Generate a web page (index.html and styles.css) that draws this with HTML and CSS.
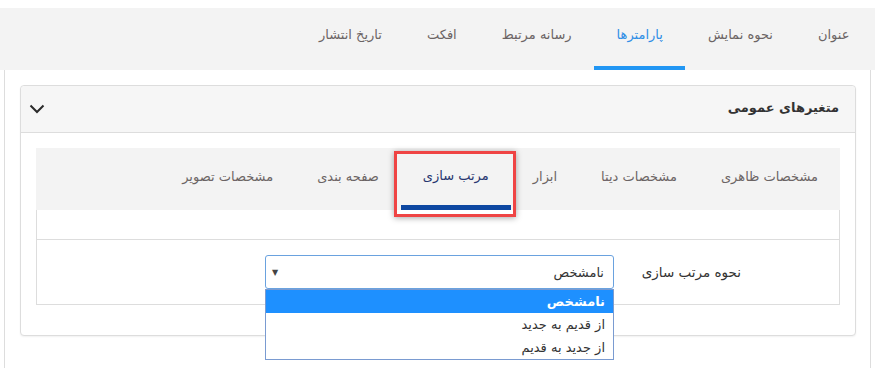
FILE: index.html
```html
<!DOCTYPE html>
<html lang="fa" dir="rtl">
<head>
  <meta charset="UTF-8">
  <title>پارامترها</title>
  <link rel="stylesheet" href="styles.css">
</head>
<body>
  <nav class="main-tabs">
    <a class="main-tab">عنوان</a>
    <a class="main-tab">نحوه نمایش</a>
    <a class="main-tab active">پارامترها</a>
    <a class="main-tab">رسانه مرتبط</a>
    <a class="main-tab">افکت</a>
    <a class="main-tab">تاریخ انتشار</a>
  </nav>

  <div class="tab-content">
    <div class="panel">
      <div class="panel-heading">
        <h3 class="panel-title">متغیرهای عمومی</h3>
        <svg class="chevron" width="16" height="10" viewBox="0 0 16 10">
          <path d="M1.5 1.5 L8 8 L14.5 1.5" fill="none" stroke="#2b2b2b" stroke-width="2"/>
        </svg>
      </div>
      <div class="panel-body">
        <div class="sub-tabs">
          <nav class="sub-nav">
            <a class="sub-tab">مشخصات ظاهری</a>
            <a class="sub-tab">مشخصات دیتا</a>
            <a class="sub-tab">ابزار</a>
            <a class="sub-tab active">مرتب سازی</a>
            <a class="sub-tab">صفحه بندی</a>
            <a class="sub-tab">مشخصات تصویر</a>
          </nav>
          <div class="sub-spacer"></div>
          <div class="form-row">
            <label class="form-label">نحوه مرتب سازی</label>
            <div class="select-wrap">
              <div class="select-box">
                <span>نامشخص</span>
                <span class="caret">▼</span>
              </div>
              <ul class="select-list">
                <li class="selected">نامشخص</li>
                <li>از قدیم به جدید</li>
                <li>از جدید به قدیم</li>
              </ul>
            </div>
          </div>
        </div>
      </div>
    </div>
  </div>
</body>
</html>
```

FILE: styles.css
```css
html, body {
  margin: 0;
  padding: 0;
  background: #fff;
}

body {
  direction: rtl;
  font-family: 'DejaVu Sans', sans-serif;
  font-size: 13px;
  color: #333;
  padding-top: 8px;
  height: 360px;
  overflow: hidden;
}

/* main tabs */
.main-tabs {
  display: flex;
  background: #f3f3f3;
  height: 62px;
  padding-right: 3px;
}

.main-tab {
  display: flex;
  align-items: center;
  padding: 0 22.5px 6px;
  color: #6b6464;
  border-bottom: 4px solid transparent;
  height: 52px;
}

.main-tab.active {
  color: #2f8ee6;
  border-bottom-color: #2196f3;
}

.tab-content {
  margin: 0 4px;
  border-left: 1px solid #ddd;
  border-right: 1px solid #ddd;
  padding: 15px 14px 0 15px;
  height: 300px;
}

/* panel */
.panel {
  border: 1px solid #ddd;
  border-radius: 4px;
  box-shadow: 0 1px 2px rgba(0, 0, 0, 0.06);
  background: #fff;
}

.panel-heading {
  display: flex;
  align-items: center;
  justify-content: space-between;
  height: 46px;
  padding: 0 16px 0 8px;
  background: #f6f6f6;
  border-bottom: 1px solid #ddd;
  border-radius: 4px 4px 0 0;
}

.panel-title {
  margin: 0 0 3px;
  font-size: 13px;
  font-weight: bold;
  color: #333;
}

.panel-body {
  padding: 15px 15px 30px;
}

/* inner tabs */
.sub-tabs {
  border: 1px solid #ddd;
  border-top: none;
}

.sub-nav {
  display: flex;
  background: #f3f3f3;
  height: 62px;
  margin: 0 -1px;
}

.sub-tab {
  position: relative;
  display: flex;
  align-items: center;
  padding: 0 22px 6px;
  color: #6b6464;
  height: 62px;
  box-sizing: border-box;
}

.sub-tab.active {
  color: #27366f;
  border-bottom: 5px solid #0d47a1;
  padding: 0 22px 3px;
}

.sub-tab.active::after {
  content: '';
  position: absolute;
  top: 3px;
  bottom: -12px;
  left: -7px;
  right: -5px;
  border: 3px solid #ef4444;
  box-shadow: 0 1px 6px rgba(0, 0, 0, 0.35);
}

.sub-spacer {
  height: 29px;
  border-bottom: 1px solid #ddd;
}

.form-row {
  display: flex;
  align-items: center;
  height: 64px;
}

.form-label {
  width: 127px;
  padding-right: 98px;
  color: #333;
  font-size: 13.5px;
}

.select-wrap {
  position: relative;
  width: 349px;
}

.select-box {
  display: flex;
  justify-content: space-between;
  align-items: center;
  height: 32px;
  padding: 0 9px 0 6px;
  border: 1px solid #6aa2df;
  border-radius: 3px;
  background: #fff;
}

.caret {
  font-size: 8px;
  color: #444;
}

.select-list {
  position: absolute;
  top: 34px;
  left: 0;
  right: 0;
  margin: 0;
  padding: 0;
  list-style: none;
  border: 1px solid #7a9bd1;
  background: #fff;
}

.select-list li {
  height: 23px;
  line-height: 23px;
  padding-right: 8px;
  color: #333;
}

.select-list li.selected {
  background: #1e90ff;
  color: #fff;
  font-weight: bold;
}
```
